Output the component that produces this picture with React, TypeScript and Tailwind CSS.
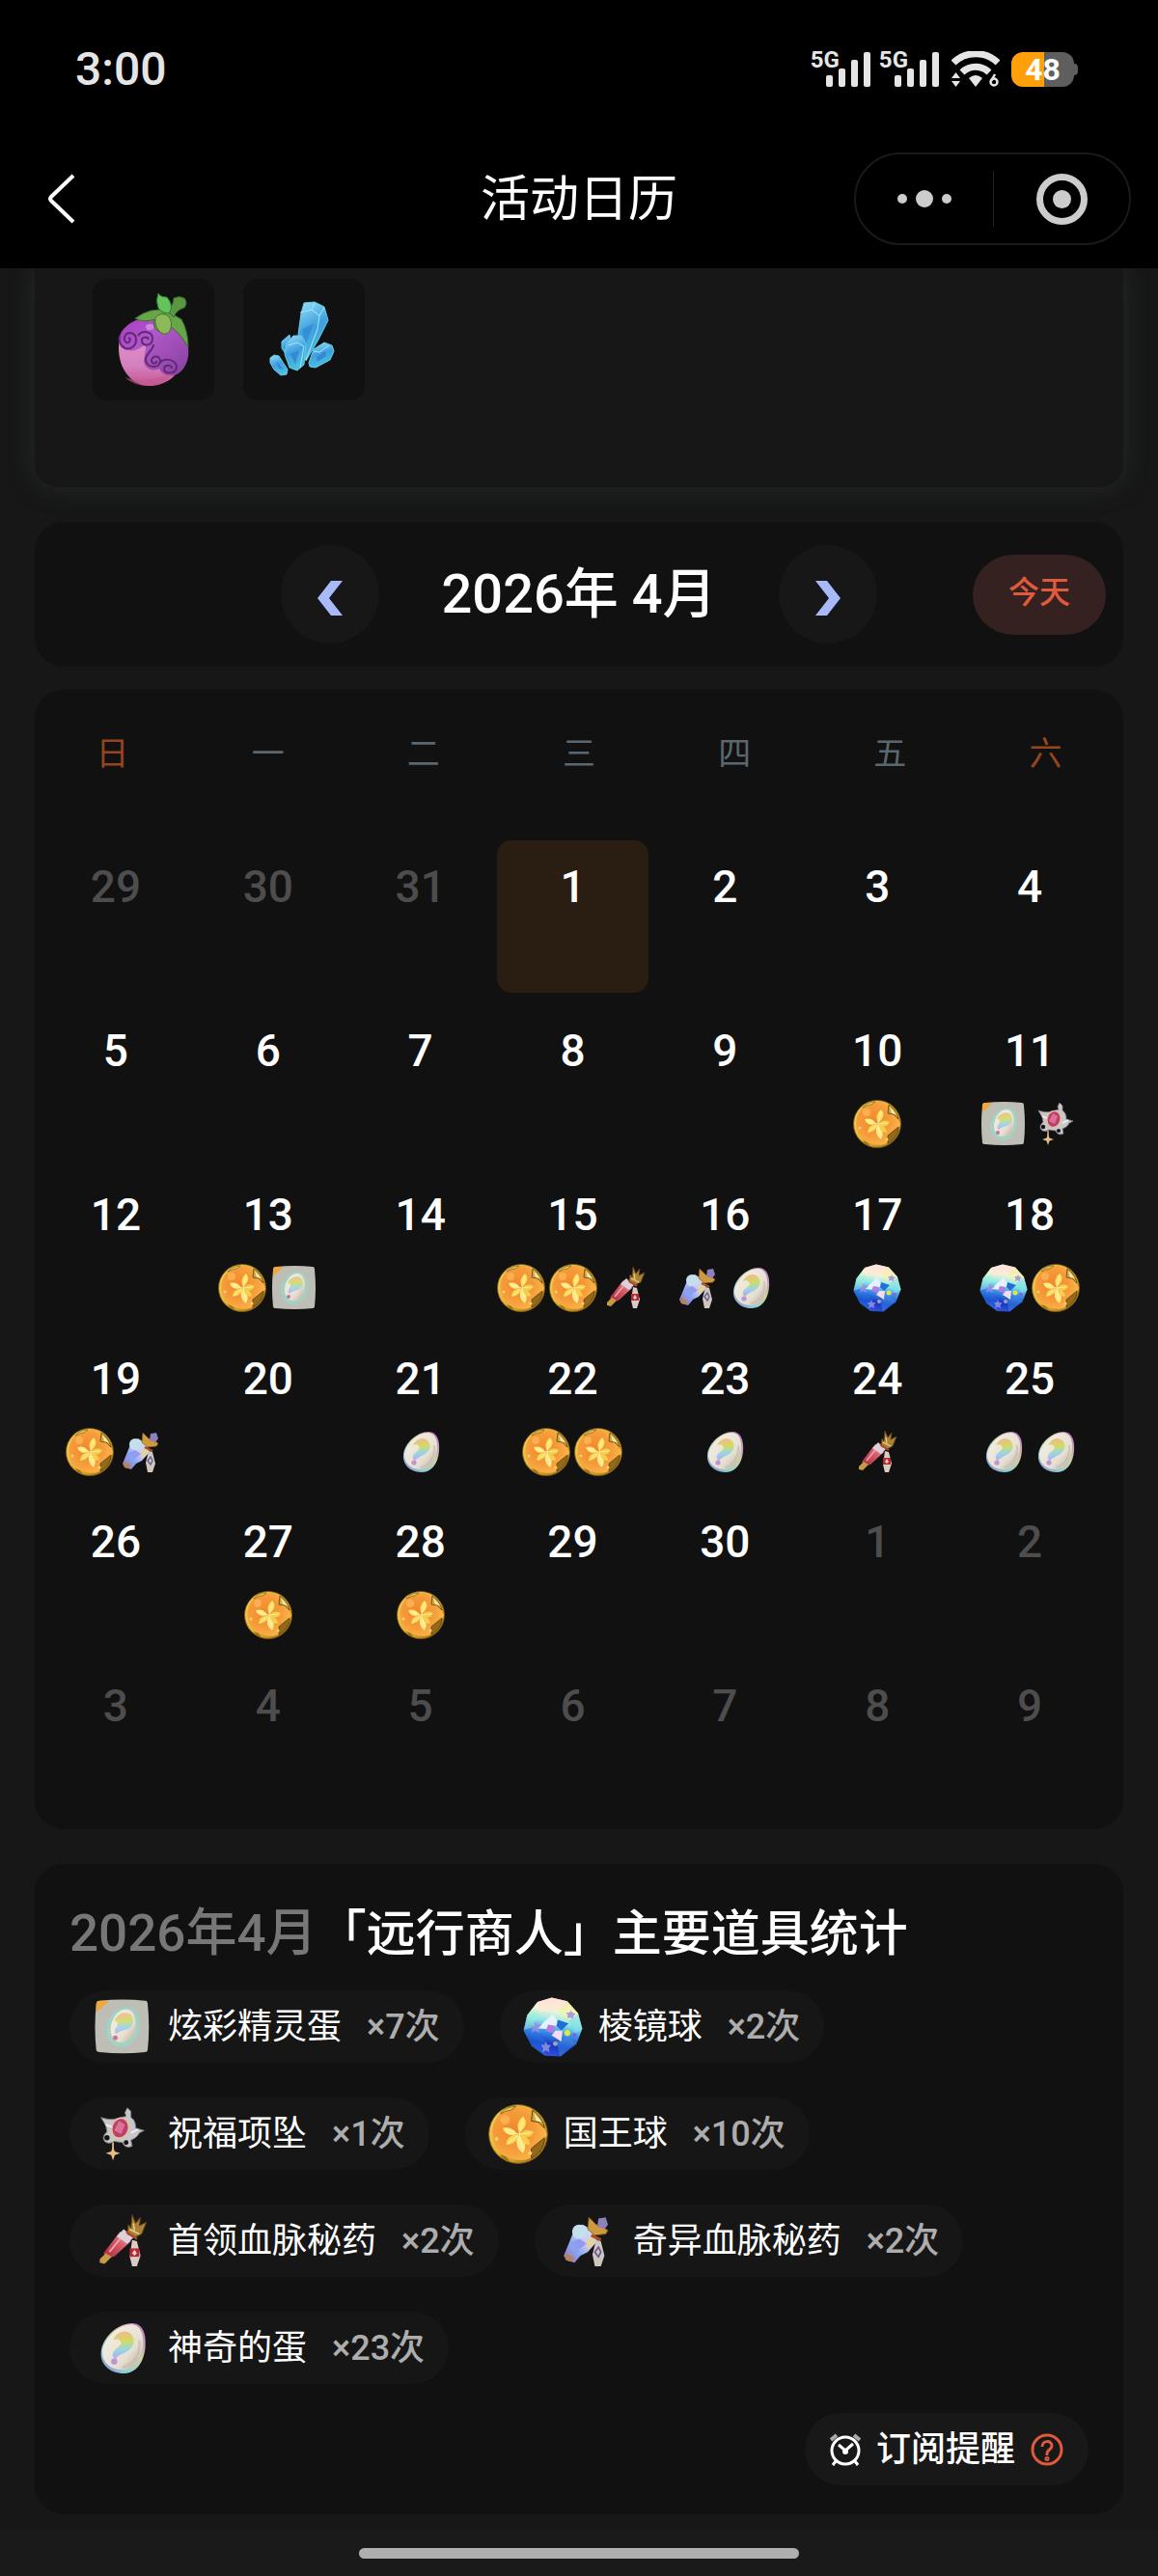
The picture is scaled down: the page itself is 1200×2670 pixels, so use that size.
import React from "react";

type ItemKey = "coin" | "tile" | "pendant" | "leader" | "strange" | "egg" | "prism";

interface Day {
  n: number;
  out?: boolean;
  today?: boolean;
  items?: ItemKey[];
}

const weekdays = ["日", "一", "二", "三", "四", "五", "六"];

const marks: Record<number, ItemKey[]> = {
  10: ["coin"],
  11: ["tile", "pendant"],
  13: ["coin", "tile"],
  15: ["coin", "coin", "leader"],
  16: ["strange", "egg"],
  17: ["prism"],
  18: ["prism", "coin"],
  19: ["coin", "strange"],
  21: ["egg"],
  22: ["coin", "coin"],
  23: ["egg"],
  24: ["leader"],
  25: ["egg", "egg"],
  27: ["coin"],
  28: ["coin"],
};

const days: Day[] = [
  ...[29, 30, 31].map((n) => ({ n, out: true })),
  ...Array.from({ length: 30 }, (_, i) => ({ n: i + 1, today: i === 0, items: marks[i + 1] })),
  ...Array.from({ length: 9 }, (_, i) => ({ n: i + 1, out: true })),
];

const stats: { icon: ItemKey; name: string; count: number }[] = [
  { icon: "tile", name: "炫彩精灵蛋", count: 7 },
  { icon: "prism", name: "棱镜球", count: 2 },
  { icon: "pendant", name: "祝福项坠", count: 1 },
  { icon: "coin", name: "国王球", count: 10 },
  { icon: "leader", name: "首领血脉秘药", count: 2 },
  { icon: "strange", name: "奇异血脉秘药", count: 2 },
  { icon: "egg", name: "神奇的蛋", count: 23 },
];

// Gradients shared by every item drawing
const Gradients = () => (
  <svg className="absolute h-0 w-0" aria-hidden="true">
    <defs>
      <radialGradient id="g-coin" cx="0.4" cy="0.45" r="0.6">
        <stop offset="0" stopColor="#f0872c" />
        <stop offset="0.6" stopColor="#f59c3a" />
        <stop offset="1" stopColor="#fbb54a" />
      </radialGradient>
      <linearGradient id="g-gold" x1="0" y1="0" x2="1" y2="1">
        <stop offset="0" stopColor="#f6dc62" />
        <stop offset="0.6" stopColor="#e2a92c" />
        <stop offset="1" stopColor="#8a5f12" />
      </linearGradient>
      <linearGradient id="g-prism" x1="0.6" y1="0" x2="0.4" y2="1">
        <stop offset="0" stopColor="#ffd9cf" />
        <stop offset="0.22" stopColor="#f3f8d4" />
        <stop offset="0.42" stopColor="#8fe6e6" />
        <stop offset="0.58" stopColor="#3f96ea" />
        <stop offset="0.8" stopColor="#1238c4" />
        <stop offset="1" stopColor="#3456d8" />
      </linearGradient>
      <linearGradient id="g-shell" x1="0" y1="0" x2="1" y2="1">
        <stop offset="0" stopColor="#f6f1e6" />
        <stop offset="0.65" stopColor="#e6e0d2" />
        <stop offset="1" stopColor="#b3a696" />
      </linearGradient>
      <linearGradient id="g-rim" x1="0" y1="1" x2="1" y2="0">
        <stop offset="0" stopColor="#8a80d0" />
        <stop offset="0.3" stopColor="#8fd0d4" />
        <stop offset="0.6" stopColor="#cfd0a0" />
        <stop offset="1" stopColor="#b868cc" />
      </linearGradient>
      <linearGradient id="g-mark" x1="0.2" y1="0" x2="0.3" y2="1">
        <stop offset="0" stopColor="#f4b690" />
        <stop offset="0.4" stopColor="#cfdc62" />
        <stop offset="0.7" stopColor="#96d4ee" />
        <stop offset="1" stopColor="#bda0e4" />
      </linearGradient>
      <linearGradient id="g-red" x1="1" y1="0" x2="0" y2="1">
        <stop offset="0" stopColor="#e8d4dc" />
        <stop offset="0.4" stopColor="#d8606c" />
        <stop offset="1" stopColor="#a8283c" />
      </linearGradient>
      <linearGradient id="g-opal" x1="0" y1="1" x2="1" y2="0">
        <stop offset="0" stopColor="#a868b8" />
        <stop offset="0.35" stopColor="#86a8f0" />
        <stop offset="0.6" stopColor="#d4c8f0" />
        <stop offset="1" stopColor="#bcecf8" />
      </linearGradient>
      <linearGradient id="g-berry" x1="0" y1="0" x2="0" y2="1">
        <stop offset="0" stopColor="#e39ad2" />
        <stop offset="0.7" stopColor="#d680bf" />
        <stop offset="1" stopColor="#c2568f" />
      </linearGradient>
      <linearGradient id="g-purple" x1="0" y1="0" x2="1" y2="1">
        <stop offset="0" stopColor="#a63cc4" />
        <stop offset="0.4" stopColor="#b058c8" />
        <stop offset="1" stopColor="#84409c" />
      </linearGradient>
      <linearGradient id="g-ice" x1="0.3" y1="0" x2="0.6" y2="1">
        <stop offset="0" stopColor="#8ad8f4" />
        <stop offset="0.45" stopColor="#3f9fe0" />
        <stop offset="1" stopColor="#4cc4e0" />
      </linearGradient>
    </defs>
  </svg>
);

const drawings: Record<ItemKey, React.ReactNode> = {
  coin: (
    <>
      <circle cx="25" cy="25" r="24.500" fill="url(#g-gold)" stroke="#7a5a14" strokeWidth="0.8" />
      <path d="M22 2c7-1 12 1 15 4l0 8c6 1 10 5 12 11-1 6-6 8-11 11l-1 8c-8 5-19 3-26-3C-1 31 0 6 22 2z" fill="url(#g-coin)" />
      <path d="M37 5l-1 9 6 1 5 5c-1-6-5-12-10-15z" fill="#cfa640" stroke="#5c420c" strokeWidth="0.8" />
      <path d="M38 7l7 8-5-1z" fill="#f4e9b0" />
      <path d="M36 37l11-9c0 8-5 14-11 17z" fill="#94691a" stroke="#5c420c" strokeWidth="0.8" />
      <path d="M10 8c3-4 8-6 13-6l-4 3c-4 0-6 2-9 3z" fill="#e9cf55" stroke="#6c5010" strokeWidth="0.6" />
      <path d="M10 42l5 2 3 4c-4-1-7-3-8-6z" fill="#9c7418" />
      <circle cx="14" cy="13" r="4" fill="#ffb85c" opacity="0.7" />
      <circle cx="7" cy="29" r="1.500" fill="#ffd070" />
      <circle cx="35" cy="41" r="1.600" fill="#ffd070" />
      <path d="M29 10q6 6-3 14-4-8 3-14z" fill="#fde26a" />
      <path d="M38 23q-3 7-12 3 4-7 12-3z" fill="#f5d04e" />
      <path d="M29 41q-8-6-4-15 9 6 4 15z" fill="#fde98a" />
      <path d="M15 34q0-8 10-9 0 8-10 9z" fill="#f8d85a" />
      <path d="M12 20q8-2 12 5-9 3-12-5z" fill="#ffeb86" />
      <path d="M35 34q-7 0-9-8 8 0 9 8z" fill="#f8cf4c" />
      <path d="M29 12l-3 13 3 13M14 21l11 4 11-1M16 33l9-7" fill="none" stroke="#fff4a6" strokeWidth="0.8" />
    </>
  ),
  tile: (
    <>
      <path d="M6 3q19-2 38 0 2 0 2 3 2 19 0 38 0 2-2 2-19 2-38 0-3 0-3-2-2-19 0-38 0-3 3-3z" fill="#bfbeb6" />
      <path d="M6 3h8L3 13V6q0-3 3-3z" fill="#f0a83a" />
      <path d="M28 9c8 0 11 8 10 16-1 9-6 16-14 16S11 34 12 26C13 18 20 9 28 9z" fill="#a9d2c2" stroke="#8fdccd" strokeWidth="1.500" opacity="0.8" />
      <path d="M28 10c6 0 8 7 8 14 0 8-5 14-12 14-6 0-9-5-9-11 0-8 6-17 13-17z" fill="url(#g-shell)" />
      <path d="M18 20c2-6 10-9 14-5 4 5 1 11-4 12-4 1-7 2-8 4-2-2-2-4 0-6 2-3 1-5-2-5z" fill="url(#g-mark)" opacity="0.85" />
      <circle cx="19" cy="34" r="2" fill="#c07898" />
    </>
  ),
  pendant: (
    <>
      <path d="M28 10l-1-3 2-4 3 3 0 5c3 2 4 5 4 9l7 2-4 2c-2 4-5 5-7 6l1 5c-4 2-7 0-8-3l-7-1c-4 3-9 1-9-3 0-2 2-4 3-5l-1-5-4-7c6 2 10 2 13 1z" fill="#c9c6ca" stroke="#817a84" strokeWidth="0.8" />
      <ellipse cx="23" cy="20" rx="7" ry="8.500" transform="rotate(18 23 20)" fill="#b93f70" stroke="#e4c096" strokeWidth="1.400" />
      <path d="M22 14l5 3-3 8-6-3z" fill="#e57f9c" opacity="0.8" />
      <circle cx="12" cy="28" r="2.200" fill="#141414" />
      <circle cx="28" cy="32" r="2" fill="#141414" />
      <path d="M17 32v5" stroke="#e0b878" strokeWidth="1.500" />
      <path d="M17 35l1.500 4.500L23 41l-4.500 1.500L17 47l-1.500-4.500L11 41l4.500-1.500z" fill="#e9bd84" />
      <path d="M11 17l5 2M38 21l-6 3" stroke="#f2f0f4" strokeWidth="1.500" />
    </>
  ),
  leader: (
    <>
      <path d="M23 17l9 8-14 13-6 1-3-4z" fill="url(#g-red)" />
      <path d="M26 15l8 7-5 5-9-6z" fill="#ddd0da" />
      <path d="M11 35l-5 5 0 3 4 1 6-6z" fill="#c99a44" />
      <path d="M33 3l3 7 4-5-1 7 6-3-4 10-6 3-6-3 1-8 2 3z" fill="#a88236" stroke="#5f4214" strokeWidth="0.800" />
      <path d="M31 15l8 4M34 10l1 6" stroke="#ecd080" strokeWidth="1.200" />
      <path d="M28 17l9 6" stroke="#b2492c" strokeWidth="2" />
      <path d="M33 24l4 1 3 12-3 9h-4l-2-8z" fill="#d8ccc4" />
      <path d="M31 31h8v7h-8z" fill="#b82833" />
      <path d="M35 32l2 3-2 2-2-2z" fill="#f0d0c8" />
      <path d="M23 23l-9 11" stroke="#f0a4ae" strokeWidth="1.500" />
    </>
  ),
  strange: (
    <>
      <path d="M14 15l7-4 8 5 4 9-8 9-6 3-5 6-7-2-2-4 5-12z" fill="url(#g-opal)" />
      <circle cx="18" cy="17" r="6" fill="#c4e0ec" />
      <path d="M11 26l7-3 6 4-8 6z" fill="#8f9cf0" />
      <path d="M24 25l5-5 2 6-6 6z" fill="#e0d49c" />
      <path d="M6 35l8 4-3 3-4-1z" fill="#b28450" />
      <path d="M26 5l-1 10 6 5 9-1 2-3-5-3-5-2z" fill="#cf9a3c" stroke="#845a1c" strokeWidth="0.700" />
      <path d="M34 6l6-1 2 6-3 4-6-2z" fill="#8f80bc" />
      <path d="M28 20l8 4" stroke="#b04a24" strokeWidth="2.500" />
      <path d="M32 24l4 1 3 12-3 9h-5l-2-10z" fill="#cfc6bc" />
      <path d="M34 30l2 4-2 4-3-4z" fill="none" stroke="#64589c" strokeWidth="1.300" />
    </>
  ),
  egg: (
    <>
      <path d="M33 4c9 0 12 9 11 20-1 13-8 22-18 22C14 46 6 38 7 28 8 16 21 4 33 4z" fill="url(#g-rim)" />
      <path d="M32 5c8 0 11 8 10 18-1 11-8 20-17 20C15 43 8 37 8 28 9 17 22 5 32 5z" fill="url(#g-shell)" />
      <path d="M17 18c3-7 11-9 15-5 5 5 2 12-4 15-4 2-7 3-9 6-3-2-3-5 0-8 4-3 6-5 4-7-1-2-3-2-6-1z" fill="url(#g-mark)" />
      <circle cx="18" cy="36" r="2.600" fill="#bd94d6" />
      <path d="M39 18c1 12-5 21-14 23" fill="none" stroke="#c4b8aa" strokeWidth="2" opacity="0.6" />
    </>
  ),
  prism: (
    <>
      <path d="M24 .5l13 3 9 10 3.500 13-5 13-13 10-13-.500-11-8-7-13 3-13L12 4z" fill="url(#g-prism)" />
      <path d="M12 4L24 .5l13 3-8 8-16 1z" fill="#ffe6da" opacity="0.7" />
      <path d="M37 3.500l9 10-8 6-9-8z" fill="#f3f0a4" opacity="0.6" />
      <path d="M3.500 15L13 12.500l-3 12-9.500 3z" fill="#9cf0d8" opacity="0.5" />
      <path d="M38 20l8-6 3.500 12.500-6 4z" fill="#7ce0e4" opacity="0.6" />
      <path d="M10 27l9 10-1 12-11-8-6-12z" fill="#2b7ce4" opacity="0.4" />
      <path d="M28 38l9-5 7 6-13 10.500z" fill="#4c9ce8" opacity="0.4" />
      <path d="M25 14l5 8-7 5-11-1z" fill="#e6f2fb" />
      <path d="M29 19l9 3-6 6-4-4z" fill="#1e70d4" />
      <path d="M27 28l6 0-1 9-8-5z" fill="#f6dcf0" />
      <path d="M21 23l6 1-2 6-6-2z" fill="#b47ce0" />
      <circle cx="37" cy="30" r="2.500" fill="#d8e84c" />
      <path d="M10 20l2 3 4 0-3 3 1 4-4-2-3 2 1-4-2-2h3zM19 37l1.500 3h3l-2 3 .500 3-3-1.500-3 1.500 1-3-2-3h3zM40 11l1 2 3 1-2 2v2l-3-1-2 1 .500-3-1.500-2h3z" fill="#9a8ee4" opacity="0.85" />
      <circle cx="43" cy="32" r="2" fill="#6c6ce0" />
      <circle cx="27" cy="39" r="2" fill="#a8a0b8" />
    </>
  ),
};

const ItemIcon: React.FC<{ name: ItemKey; className: string }> = ({ name, className }) => (
  <svg viewBox="0 0 50 50" className={`shrink-0 ${className}`} aria-hidden="true">
    {drawings[name]}
  </svg>
);

const Signal = () => (
  <div className="flex items-start">
    <span className="-mt-1 h-6 text-[24px] leading-6 font-bold">5G</span>
    <svg viewBox="0 0 47 36" className="-ml-[14px] h-9 w-[47px]" fill="#e5e5e5">
      <rect x="0" y="24" width="7" height="12" rx="2" />
      <rect x="13" y="17" width="7" height="19" rx="2" />
      <rect x="26" y="8" width="7" height="28" rx="2" />
      <rect x="39" y="0" width="7" height="36" rx="2" />
    </svg>
  </div>
);

const StatusBar = () => (
  <div className="flex h-36 items-center justify-between pr-[83px] pl-[78px] text-[#e5e5e5]">
    <time className="text-[48px] font-medium">3:00</time>
    <div className="flex items-center gap-2">
      <Signal />
      <Signal />
      <svg viewBox="0 0 50 38" className="ml-1 h-[38px] w-[50px]">
        <path d="M2 12a33 33 0 0 1 46 0" fill="none" stroke="#e5e5e5" strokeWidth="7" />
        <path d="M11 22a20 20 0 0 1 28 0" fill="none" stroke="#e5e5e5" strokeWidth="7" />
        <path d="M18 28q7-6 14 0l-7 9z" fill="#e5e5e5" />
        <path d="M0 28l4.500-6 4.500 6zM0 31h9l-4.500 6z" fill="#e5e5e5" />
        <circle cx="44" cy="32" r="3.500" fill="none" stroke="#e5e5e5" strokeWidth="2.500" />
        <path d="M41 31l4-7" stroke="#e5e5e5" strokeWidth="2.500" />
      </svg>
      <div className="ml-1 flex items-center">
        <div className="flex h-9 w-[65px] items-center justify-center rounded-xl bg-linear-to-r from-[#ff9f0a] from-52% to-[#5e5e5e] to-52% text-[32px] font-bold text-white">
          48
        </div>
        <span className="h-3 w-1 rounded-r-md bg-[#5e5e5e]" />
      </div>
    </div>
  </div>
);

const NavBar = () => (
  <div className="grid h-[124px] grid-cols-[1fr_auto_1fr] items-center px-7">
    <button type="button" aria-label="返回" className="justify-self-start pl-5">
      <svg viewBox="0 0 30 52" className="h-[52px] w-[30px]" fill="none" stroke="#fff" strokeWidth="4">
        <path d="M28 2L5 24q-2 2 0 4l23 22" />
      </svg>
    </button>
    <h1 className="text-[51px] leading-none text-white">活动日历</h1>
    <div className="flex h-24 w-[287px] items-center justify-self-end rounded-full border-2 border-[#1a1a1a]">
      <button type="button" aria-label="更多" className="flex h-full w-[142px] items-center justify-center gap-[9px]">
        <span className="size-[10px] rounded-full bg-[#ccc]" />
        <span className="size-[18px] rounded-full bg-[#ccc]" />
        <span className="size-[10px] rounded-full bg-[#ccc]" />
      </button>
      <span className="h-[58px] w-px bg-[#222]" />
      <button type="button" aria-label="关闭" className="flex h-full flex-1 items-center justify-center">
        <span className="flex size-[53px] items-center justify-center rounded-full border-[7px] border-[#ccc]">
          <span className="size-[19px] rounded-full bg-[#ccc]" />
        </span>
      </button>
    </div>
  </div>
);

const Berry = () => (
  <svg viewBox="0 0 76 98" className="h-[110px] w-[76px]" aria-hidden="true">
    <path d="M24 28C10 32 2 44 2 58c0 22 14 39 32 39 12 0 22-6 27-12 12-8 15-22 10-36-6-15-25-27-47-21z" fill="url(#g-berry)" />
    <path d="M20 29C8 34 0 44 3 54c5 8 16 8 22 3l5-3c1 8-4 15-1 21 4 7 12 6 15 4 3 8 14 9 20 5 11-8 13-24 7-38C63 30 40 21 20 29z" fill="url(#g-purple)" />
    <path d="M8 88q20 8 50-5-10 14-25 14-15 0-25-9z" fill="#c4588f" opacity="0.6" />
    <g fill="none" stroke="#642878" strokeWidth="2">
      <path d="M3 45c-2 8 4 15 11 13 8-3 8-15 0-16-6 0-8 7-4 10 4 1 5-4 2-5" />
      <path d="M22 45c4-6 15-5 15 3 0 7-9 9-11 3-1-5 6-6 7-2" />
      <path d="M38 54c0 6-9 10-8 17 2 8 15 8 15 0 0-6-9-6-9 0 1 4 6 3 5 0" />
      <path d="M44 74c4-7 17-5 18 3 0 7-11 9-13 3 0-6 8-5 8-1" />
    </g>
    <path d="M19 27q16-12 33-8l15 9q7 12 7 29-8-15-18-21-6 10-13 4-6-4-4-12-10 4-20-1z" fill="#67a648" stroke="#3e6c2c" strokeWidth="1" />
    <path d="M40 26q6-6 13-2 6 7 2 16-4 5-9 2-7-5-6-16z" fill="#8cba58" stroke="#46742c" strokeWidth="1" />
    <path d="M51 18q8-3 8-12 6-3 11 0 4 5 0 10-8 2-11 10z" fill="#5a9644" stroke="#3a6428" strokeWidth="1" />
    <path d="M43 1q2 4 9 4 7 8 3 16-8 2-12-5-3-7 0-15z" fill="#64c45c" stroke="#34743c" strokeWidth="1" />
    <path d="M30 34q10-4 8 4-8 4-8-4z" fill="#dc9ce8" opacity="0.7" />
  </svg>
);

const Crystal = () => (
  <svg viewBox="0 0 68 78" className="mr-1 h-[86px] w-[68px]" aria-hidden="true">
    <g fill="url(#g-ice)" stroke="#68cce8" strokeWidth="1" strokeLinejoin="round">
      <path d="M36 1l11-1 10 5 4 14-10 20-13 22-8-27 3-22z" />
      <path d="M13 41l8-7 4 18-5 6-7-10z" />
      <path d="M18 43l7-8 8 0 5 8-2 22-7 6-8-3-5-14z" />
      <path d="M41 63l5-14 11-7 8 3 2 6-4 9-15 8-6-1z" />
      <path d="M1 58l4-3 5 1 9 14-1 5-6 1-7-6-4-7z" />
    </g>
    <g fill="none" stroke="#a4e8fa" strokeWidth="1">
      <path d="M32 11l12-3 8 6-2 14M44 8l3-7M52 14l5-8M50 28l-12 32" />
      <path d="M20 45l9-3 7 4-4 22" />
      <path d="M46 51l6 1 10-7" />
    </g>
    <path d="M34 28l12-6-8 22z" fill="#2272c4" opacity="0.4" />
    <path d="M22 54l9-4-4 15zM49 57l9-6 1 5-9 6zM7 61l8 9-5-1z" fill="#2c74c8" opacity="0.6" />
  </svg>
);

const MonthBar = () => (
  <section className="mt-9 grid h-[150px] grid-cols-[1fr_618px_1fr] items-center rounded-[30px] bg-[#111]">
    <div className="col-start-2 flex items-center justify-between">
      <button type="button" aria-label="上个月" className="flex size-[102px] items-center justify-center rounded-full bg-[#171717] pt-2">
        <svg viewBox="0 0 26 36" className="h-9 w-[26px]" fill="#a9bafb">
          <path d="M14 0h12L12 18l14 18H14L0 18z" />
        </svg>
      </button>
      <h2 className="text-[56px] leading-none font-medium text-white">2026年 4月</h2>
      <button type="button" aria-label="下个月" className="flex size-[102px] items-center justify-center rounded-full bg-[#171717] pt-2">
        <svg viewBox="0 0 26 36" className="h-9 w-[26px]" fill="#a9bafb">
          <path d="M12 0H0l14 18L0 36h12l14-18z" />
        </svg>
      </button>
    </div>
    <button type="button" className="mr-[18px] h-[83px] w-[138px] justify-self-end rounded-full bg-[#342120] pb-1 text-[32px] font-medium text-[#e05a3c]">
      今天
    </button>
  </section>
);

const DayCell: React.FC<{ day: Day }> = ({ day }) => (
  <button
    type="button"
    className={`flex aspect-square flex-col items-center rounded-[15px] pt-6 ${day.today ? "bg-[#2a1e12]" : ""}`}
  >
    <span className={`text-[46px] leading-12 font-medium ${day.out ? "text-[#4d4d4d]" : "text-white"}`}>{day.n}</span>
    {day.items && (
      <span className="mt-[27px] flex justify-center gap-1">
        {day.items.map((item, i) => (
          <ItemIcon key={i} name={item} className="size-[50px]" />
        ))}
      </span>
    )}
  </button>
);

const Calendar = () => (
  <section className="mt-6 rounded-[30px] bg-[#111] pb-[18px]">
    <div className="grid h-[132px] grid-cols-7 items-center text-center text-[34px] text-[#5b676e]">
      {weekdays.map((w, i) => (
        <span key={w} className={i === 0 || i === 6 ? "text-[#95451e]" : ""}>
          {w}
        </span>
      ))}
    </div>
    <div className="mt-6 grid grid-cols-7 gap-y-3 pr-[18px] pl-[5px]">
      {days.map((day, i) => (
        <DayCell key={i} day={day} />
      ))}
    </div>
  </section>
);

const Stats = () => (
  <section className="mt-9 rounded-[30px] bg-[#111] px-9 pt-[42px] pb-[30px]">
    <h2 className="text-[51px] leading-[60px] font-medium text-white">
      <span className="text-[53px] text-[#777]">2026年4月</span>「远行商人」主要道具统计
    </h2>
    <ul className="mt-7 flex flex-wrap gap-x-[37px] gap-y-9">
      {stats.map((s) => (
        <li key={s.name} className="flex h-[75px] items-center rounded-full bg-[#161616] px-6 text-[36px]">
          <ItemIcon name={s.icon} className="size-[62px]" />
          <span className="ml-4 text-white">{s.name}</span>
          <span className="mr-px ml-[26px] font-medium text-[#adadad]">×{s.count}次</span>
        </li>
      ))}
    </ul>
    <div className="mt-[30px] flex justify-end">
      <button type="button" className="flex h-[75px] items-center rounded-full bg-[#181818] px-[26px] text-[36px] font-medium text-white">
        <svg viewBox="0 0 32 34" className="h-[34px] w-8" fill="none" stroke="#fff" strokeWidth="3">
          <circle cx="16" cy="18" r="14" />
          <path d="M9 12l7 6 8-7M6 29l-3 4M26 29l3 4" />
          <circle cx="16" cy="19" r="1.500" />
          <path d="M1 7l6-5M25 2l6 5" strokeWidth="4" stroke="#aaa" />
        </svg>
        <span className="mx-4">订阅提醒</span>
        <svg viewBox="0 0 34 34" className="size-[34px]" fill="none" stroke="#e0593a" strokeWidth="3">
          <circle cx="17" cy="17" r="15" />
          <path d="M12 14c0-7 10-7 10-1 0 4-5 4-5 8v2" />
          <circle cx="17" cy="26.500" r="1" />
        </svg>
      </button>
    </div>
  </section>
);

export default function App() {
  return (
    <div className="flex min-h-screen flex-col bg-[#171717] font-['Roboto','Noto_Sans_CJK_SC',sans-serif]">
      <Gradients />
      <header className="relative z-10 bg-black pb-[10px]">
        <StatusBar />
        <NavBar />
      </header>
      <main className="px-9">
        <section className="flex gap-[30px] rounded-b-3xl bg-[#171717] px-[60px] pt-[11px] pb-[90px] shadow-[0_0_24px_#252b2d]">
          <div className="flex size-[126px] items-center justify-center rounded-[15px] bg-[#111]">
            <Berry />
          </div>
          <div className="flex size-[126px] items-center justify-center rounded-[15px] bg-[#111]">
            <Crystal />
          </div>
        </section>
        <MonthBar />
        <Calendar />
        <Stats />
      </main>
      <footer className="mt-auto flex h-12 items-start justify-center bg-[#1a1a1a] pt-[19px]">
        <span className="h-[11px] w-[38%] rounded-full bg-[#afafaf]" />
      </footer>
    </div>
  );
}
